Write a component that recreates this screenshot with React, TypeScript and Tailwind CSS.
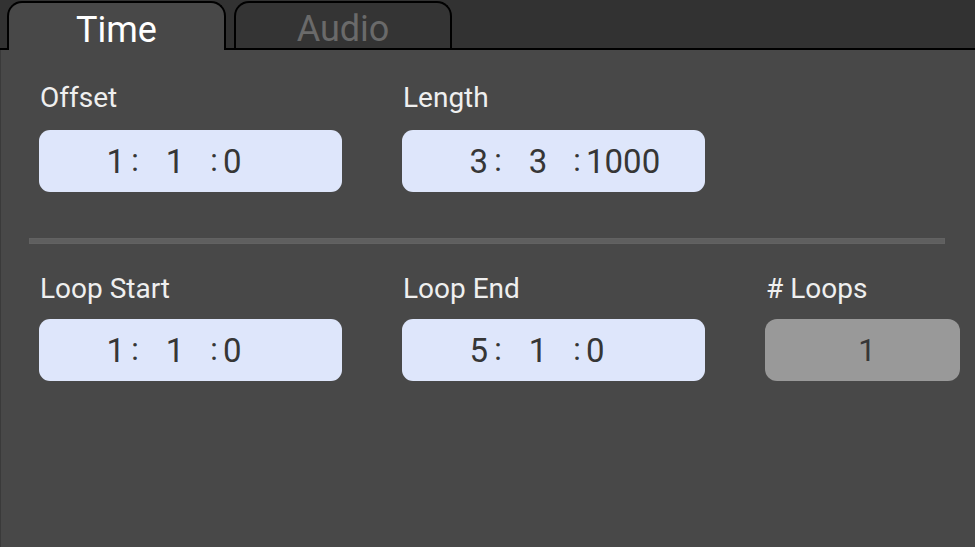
import React from "react";

type TimeVal = [string, string, string];

function TimeField({ v }: { v: TimeVal }) {
  return (
    <div className="h-[62px] w-[303px] rounded-[11px] bg-[#dee6fb] flex items-center text-[33px] leading-none text-[#363636]">
      <span className="ml-[36px] w-[50px] text-right">{v[0]}</span>
      <span className="w-[20px] text-center text-[31px] -translate-y-[1px]">:</span>
      <span className="w-[60px] text-center">{v[1]}</span>
      <span className="w-[18px] text-center text-[31px] -translate-y-[1px]">:</span>
      <span className="text-left">{v[2]}</span>
    </div>
  );
}

function Label({ children, top }: { children: React.ReactNode; top: boolean }) {
  return (
    <div
      className={
        top
          ? "text-[28px] leading-[32px] text-[#efefef] pl-[1px] pt-[1px] mb-[16px]"
          : "text-[28px] leading-[32px] text-[#efefef] pl-[1px] pt-[3px] mb-[14px]"
      }
    >
      {children}
    </div>
  );
}

export default function App() {
  return (
    <div className="w-[975px] h-[547px] bg-[#484848] flex flex-col font-[Roboto,sans-serif] overflow-hidden">
      <div className="h-[50px] bg-[#323232] border-b-2 border-black flex items-end pl-[7px] gap-[8px] shrink-0">
        <div className="relative z-10 -mb-[2px] h-[49px] w-[219px] bg-[#484848] border-2 border-b-0 border-black rounded-t-[15px] flex items-center justify-center pt-[6px] text-[36px] text-white">
          Time
        </div>
        <div className="h-[47px] w-[218px] bg-[#343434] border-2 border-b-0 border-black rounded-t-[15px] flex items-center justify-center pt-[6px] text-[36px] text-[#6a6a6a]">
          Audio
        </div>
      </div>
      <div className="flex-1 border-l border-[#3a3a3a] pt-[31px]">
        <div className="flex gap-x-[60px] pl-[38px]">
          <div>
            <Label top>Offset</Label>
            <TimeField v={["1", "1", "0"]} />
          </div>
          <div>
            <Label top>Length</Label>
            <TimeField v={["3", "3", "1000"]} />
          </div>
        </div>
        <div className="mt-[46px] ml-[28px] w-[916px] h-[6px] bg-[#5f5f5f] border border-[#626262]" />
        <div className="flex gap-x-[60px] pl-[38px] mt-[26px]">
          <div>
            <Label top={false}>Loop Start</Label>
            <TimeField v={["1", "1", "0"]} />
          </div>
          <div>
            <Label top={false}>Loop End</Label>
            <TimeField v={["5", "1", "0"]} />
          </div>
          <div>
            <Label top={false}># Loops</Label>
            <div className="h-[62px] w-[195px] rounded-[12px] bg-[#999999] flex items-center justify-center pl-[9px] text-[31px] leading-none text-[#363636]">
              1
            </div>
          </div>
        </div>
      </div>
    </div>
  );
}
